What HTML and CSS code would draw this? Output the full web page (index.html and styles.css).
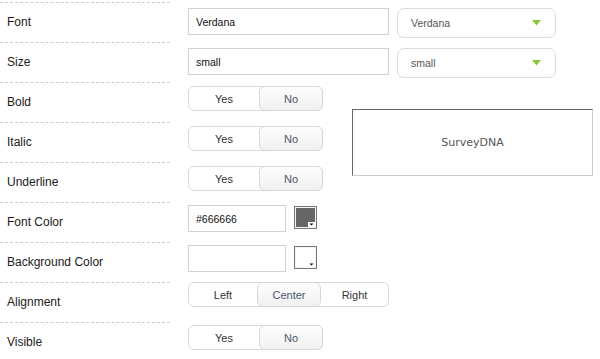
FILE: index.html
```
<!DOCTYPE html>
<html lang="en">
<head>
    <meta charset="UTF-8">
    <title>Text Properties</title>
    <link rel="stylesheet" href="styles.css">
</head>
<body>

<!-- Property grid: label column, controls, preview -->
<div class="props">
    <div class="label">Font</div>
    <div class="field field-text">
        <input class="text wide" type="text" value="Verdana">
        <div class="select"><span>Verdana</span><svg width="9" height="6" viewBox="0 0 9 6"><path d="M0 0h9L4.5 5.5z" fill="#8cc63f"/></svg></div>
    </div>

    <div class="label">Size</div>
    <div class="field field-text">
        <input class="text wide" type="text" value="small">
        <div class="select"><span>small</span><svg width="9" height="6" viewBox="0 0 9 6"><path d="M0 0h9L4.5 5.5z" fill="#8cc63f"/></svg></div>
    </div>

    <div class="label">Bold</div>
    <div class="field short">
        <div class="toggle yn"><span class="opt">Yes</span><span class="opt on">No</span></div>
    </div>

    <div class="preview">SurveyDNA</div>

    <div class="label">Italic</div>
    <div class="field short">
        <div class="toggle yn"><span class="opt">Yes</span><span class="opt on">No</span></div>
    </div>

    <div class="label">Underline</div>
    <div class="field short">
        <div class="toggle yn"><span class="opt">Yes</span><span class="opt on">No</span></div>
    </div>

    <div class="label">Font Color</div>
    <div class="field field-color">
        <input class="text narrow" type="text" value="#666666">
        <div class="swatch dark"><svg class="caret" width="7" height="5" viewBox="0 0 7 5"><rect width="7" height="5" fill="#fff"/><path d="M1.5 1.5h4L3.5 3.5z" fill="#000"/></svg></div>
    </div>

    <div class="label">Background Color</div>
    <div class="field field-color">
        <input class="text narrow" type="text" value="">
        <div class="swatch"><svg class="caret" width="7" height="5" viewBox="0 0 7 5"><rect width="7" height="5" fill="#fff"/><path d="M1.5 1.5h4L3.5 3.5z" fill="#000"/></svg></div>
    </div>

    <div class="label">Alignment</div>
    <div class="field field-align">
        <div class="toggle align"><span class="opt">Left</span><span class="opt on">Center</span><span class="opt">Right</span></div>
    </div>

    <div class="label">Visible</div>
    <div class="field field-color">
        <div class="toggle yn"><span class="opt">Yes</span><span class="opt on">No</span></div>
    </div>
</div>

</body>
</html>
```

FILE: styles.css
```
/* Basic styling */
body {
    margin: 0;
    font-family: "Liberation Sans", Arial, sans-serif;
    color: #222;
    background: #fff;
}
.props {
    display: grid;
    grid-template-columns: 188px 164px 248px;
    grid-auto-rows: 40px;
    margin-top: 2px;
}
.label {
    grid-column: 1;
    width: 170px;
    box-sizing: border-box;
    border-top: 1px dashed #ccc;
    padding-left: 7px;
    padding-bottom: 1px;
    display: flex;
    align-items: center;
    font-size: 12px;
    color: #1a1a1a;
}
.field {
    grid-column: 2 / 4;
    display: flex;
    align-items: flex-start;
    gap: 8px;
    margin-top: 4px;
}
.field.short {
    grid-column: 2;
}
.field-text {
    margin-top: 6px;
}
.field-color {
    margin-top: 3px;
}
.field-align {
    margin-top: 0;
}

/* Text inputs */
.text {
    box-sizing: border-box;
    height: 27px;
    margin: 0;
    padding: 0 7px;
    border: 1px solid #d0d0d0;
    font-family: "Liberation Sans", Arial, sans-serif;
    font-size: 10.5px;
    color: #111;
    outline: none;
}
.text.wide {
    width: 201px;
}
.text.narrow {
    width: 98px;
}

/* Dropdowns */
.select {
    box-sizing: border-box;
    width: 159px;
    height: 30px;
    border: 1px solid #dcdcdc;
    border-radius: 7px;
    display: flex;
    align-items: center;
    justify-content: space-between;
    padding: 0 14px 0 13px;
    font-size: 10.5px;
    color: #555;
}

/* Segmented toggles */
.toggle {
    box-sizing: border-box;
    display: flex;
    height: 25px;
    border: 1px solid #dadada;
    border-radius: 6px;
    font-size: 11px;
    background: #fff;
}
.toggle.yn {
    width: 135px;
}
.toggle.align {
    width: 201px;
}
.opt {
    display: flex;
    align-items: center;
    justify-content: center;
    color: #333;
}
.opt.on {
    box-sizing: border-box;
    margin: -1px 0;
    border: 1px solid #d8d8d8;
    border-radius: 6px;
    background: linear-gradient(#fdfdfd, #f1f1f1);
    color: #4a5870;
}
.yn .opt:first-child {
    width: 70px;
}
.yn .opt.on {
    flex: 1;
    margin-right: -1px;
}
.align .opt {
    width: 68px;
}
.align .opt.on {
    width: 64px;
}
.align .opt:last-child {
    flex: 1;
}

/* Colour swatches */
.swatch {
    position: relative;
    box-sizing: border-box;
    width: 23px;
    height: 23px;
    margin-top: 1px;
    border: 1px solid #777;
    box-shadow: inset 0 0 0 1px #f4f4f4;
    background: #fff;
}
.swatch.dark {
    background: #666;
}
.caret {
    position: absolute;
    right: 1px;
    bottom: 1px;
}

/* Preview */
.preview {
    grid-column: 3;
    grid-row: 3 / 6;
    align-self: start;
    box-sizing: border-box;
    width: 241px;
    height: 67px;
    margin-top: 27px;
    border: 1px solid;
    border-color: #666 #ccc #ccc #666;
    display: flex;
    align-items: center;
    justify-content: center;
    font-family: "DejaVu Sans", Verdana, sans-serif;
    font-size: 11px;
    color: #555;
}
```
